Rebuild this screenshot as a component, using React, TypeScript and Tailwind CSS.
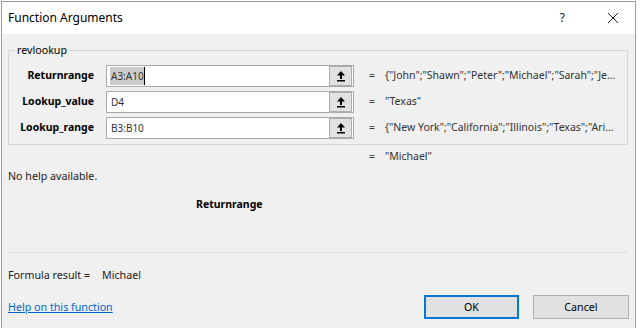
const font = { fontFamily: '"Noto Sans", "Segoe UI", sans-serif' };

const UpIcon = () => (
    <svg width="10" height="12" viewBox="0 0 10 12">
        <polygon points="5,1 9,5.5 1,5.5" fill="#000" />
        <rect x="4" y="5" width="2" height="4" fill="#000" />
        <rect x="1" y="10" width="8" height="1.5" fill="#000" />
    </svg>
);

const ArgRow = ({ label, value, result, selected }: { label: string; value: string; result: string; selected?: boolean }) => {
    return (
        <div className="flex items-center h-[22px]">
            <div className="shrink-0 w-[85px] text-right font-bold text-[10.5px] text-black whitespace-nowrap">{label}</div>
            <div className="shrink-0 flex items-center ml-[12px] w-[248px] h-[22px] border border-[#a9a9a9] bg-white">
                <div className="flex flex-1 items-center pl-[3px] text-[10px] text-[#333]">
                    {selected ? (
                        <span className="inline-block h-[18px] leading-[18px] pl-px bg-[#cccccc] border-r border-black">{value}</span>
                    ) : (
                        <span className="pl-px">{value}</span>
                    )}
                </div>
                <div className="flex justify-center items-center mr-px w-[23px] h-[20px] bg-[#e1e1e1] border border-[#adadad]">
                    <UpIcon />
                </div>
            </div>
            <div className="shrink-0 ml-[15px] text-[10.5px] text-[#333]">=</div>
            <div className="ml-[10px] text-[10.5px] text-[#333] whitespace-nowrap">{result}</div>
        </div>
    );
};

const App = () => {
    return (
        <div className="w-[640px] h-[328px] overflow-hidden bg-white" style={font}>
            <div className="mt-px ml-px w-[635px] h-[327px] border-t border-l border-r border-[#9a9a9a] flex flex-col">
                <div className="flex items-center h-[32px] bg-white">
                    <div className="pl-[6px] text-[12px] text-black">Function Arguments</div>
                    <div className="ml-auto text-[12px] text-[#222]">?</div>
                    <div className="ml-[42px] mr-[16px] text-[#222]">
                        <svg width="12" height="12" viewBox="0 0 12 12">
                            <path d="M1 1 L11 11 M11 1 L1 11" stroke="#222" strokeWidth="1" />
                        </svg>
                    </div>
                </div>
                <div className="flex-1 bg-[#f0f0f0] pl-[6px]">
                    <div className="relative mt-[16px] w-[620px] h-[95px] border border-[#d5d5d5]">
                        <span className="absolute left-[6px] top-[-9px] px-[2px] bg-[#f0f0f0] text-[10.7px] text-black leading-[16px]">
                            revlookup
                        </span>
                        <div className="flex flex-col gap-[4px] pt-[14px]">
                            <ArgRow
                                label="Returnrange"
                                value="A3:A10"
                                selected
                                result={'{"John";"Shawn";"Peter";"Michael";"Sarah";"Je...'}
                            />
                            <ArgRow label="Lookup_value" value="D4" result={'"Texas"'} />
                            <ArgRow
                                label="Lookup_range"
                                value="B3:B10"
                                result={'{"New York";"California";"Illinois";"Texas";"Ari...'}
                            />
                        </div>
                    </div>
                    <div className="flex items-center mt-[4px] h-[16px] pl-[361px] text-[10.5px] text-[#333]">
                        <span>=</span>
                        <span className="ml-[10px]">"Michael"</span>
                    </div>
                    <div className="mt-[3px] h-[16px] text-[10.7px] text-[#222] leading-[16px]">No help available.</div>
                    <div className="mt-[12px] h-[16px] pl-[188px] text-[10.5px] font-bold text-black leading-[16px]">Returnrange</div>
                    <div className="mt-[40px] w-[620px] h-px bg-[#dcdcdc]" />
                    <div className="flex items-center mt-[14px] h-[16px] text-[10.7px] text-[#222]">
                        <span>Formula result =</span>
                        <span className="ml-[12px]">Michael</span>
                    </div>
                    <div className="flex items-center mt-[12px] h-[24px]">
                        <a className="text-[10.7px] text-[#0066cc] underline">Help on this function</a>
                        <button className="ml-auto w-[95px] h-[24px] bg-[#e1e1e1] border-2 border-[#0078d7] text-[10.7px] text-black">
                            OK
                        </button>
                        <button className="ml-[14px] mr-[6px] w-[96px] h-[24px] bg-[#e1e1e1] border border-[#adadad] text-[10.7px] text-black">
                            Cancel
                        </button>
                    </div>
                </div>
            </div>
        </div>
    );
};

export default App;
